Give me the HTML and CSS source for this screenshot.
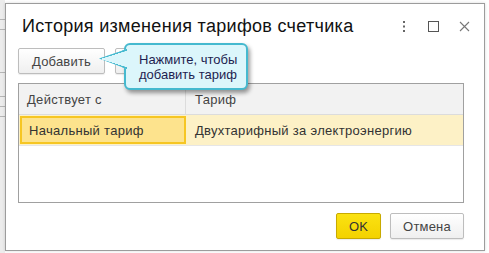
FILE: index.html
```html
<!DOCTYPE html>
<html lang="ru">
<head>
    <meta charset="UTF-8">
    <title>История изменения тарифов счетчика</title>
    <link rel="stylesheet" href="styles.css">
</head>
<body>
    <div class="behind">
        <div class="behind-line"></div>
        <div class="behind-line"></div>
        <div class="behind-line gap"></div>
        <div class="behind-line"></div>
        <div class="behind-line"></div>
        <div class="behind-line"></div>
    </div>

    <div class="dialog">
        <div class="title-bar">
            <h1>История изменения тарифов счетчика</h1>
            <div class="title-tools">
                <svg width="4" height="11" viewBox="0 0 4 11">
                    <rect x="1" y="0" width="2" height="2" fill="#666"/>
                    <rect x="1" y="4.5" width="2" height="2" fill="#666"/>
                    <rect x="1" y="9" width="2" height="2" fill="#666"/>
                </svg>
                <svg width="11" height="11" viewBox="0 0 11 11">
                    <rect x="0.5" y="0.5" width="10" height="10" fill="none" stroke="#555"/>
                </svg>
                <svg width="11" height="11" viewBox="0 0 11 11">
                    <path d="M1 1 L10 10 M10 1 L1 10" stroke="#777" stroke-width="1.1"/>
                </svg>
            </div>
        </div>

        <div class="toolbar">
            <button class="btn">Добавить</button>
            <button class="btn btn-hidden"></button>

            <div class="callout">
                <span class="callout-tail"></span>
                Нажмите, чтобы<br>добавить тариф
            </div>
        </div>

        <div class="grid">
            <div class="grid-head">
                <div class="col-from">Действует с</div>
                <div class="col-tariff">Тариф</div>
            </div>
            <div class="grid-row selected">
                <div class="col-from current">Начальный тариф</div>
                <div class="col-tariff">Двухтарифный за электроэнергию</div>
            </div>
        </div>

        <div class="footer">
            <button class="btn btn-ok">OK</button>
            <button class="btn">Отмена</button>
        </div>
    </div>
</body>
</html>
```

FILE: styles.css
```css
html, body {
    margin: 0;
}

body {
    background: #fff;
    font-family: Arial, "Liberation Sans", sans-serif;
    color: #333;
    display: flex;
    align-items: flex-start;
    height: 253px;
    overflow: hidden;
}

/* the form that sits behind the dialog */
.behind {
    width: 5px;
    height: 253px;
    background: #ececec;
    padding-top: 19px;
    box-sizing: border-box;
}

.behind-line {
    height: 1px;
    background: #b5b5b5;
    margin-bottom: 9px;
}

.behind-line.gap {
    margin-top: 42px;
    margin-bottom: 23px;
}

.dialog {
    margin-top: 3px;
    width: 480px;
    height: 248px;
    box-sizing: border-box;
    background: #fff;
    border: 1px solid #9c9c9c;
    box-shadow: 0 0 3px rgba(0, 0, 0, .15);
    padding: 0 20px 0 12px;
    display: flex;
    flex-direction: column;
}

.title-bar {
    display: flex;
    align-items: center;
    height: 40px;
    padding-left: 4px;
}

h1 {
    flex-grow: 1;
    margin: 0;
    font-size: 18px;
    font-weight: normal;
    letter-spacing: .3px;
    color: #111;
    line-height: 22px;
    padding-top: 4px;
}

.title-tools {
    display: flex;
    align-items: center;
    margin-right: -6px;
    padding-top: 5px;
}

.title-tools svg {
    display: block;
}

.title-tools svg:nth-child(1) { margin-right: 22px; }
.title-tools svg:nth-child(2) { margin-right: 20px; }

.toolbar {
    position: relative;
    display: flex;
    gap: 10px;
    margin-top: 4px;
    height: 26px;
}

.btn {
    height: 26px;
    padding: 0 13px;
    font-family: inherit;
    font-size: 13px;
    letter-spacing: .2px;
    color: #444;
    background: linear-gradient(#ffffff, #efefef);
    border: 1px solid #bdbdbd;
    border-radius: 2px;
    box-shadow: 0 1px 1px rgba(0, 0, 0, .08);
}

.btn-hidden {
    width: 80px;
}

.callout {
    position: absolute;
    left: 106px;
    top: -5px;
    width: 124px;
    height: 47px;
    box-sizing: border-box;
    padding: 7px 0 0 13px;
    background: #dcf6fb;
    border: 2px solid #45b9cf;
    border-radius: 6px;
    box-shadow: 2px 3px 4px rgba(0, 0, 0, .4);
    font-size: 13px;
    line-height: 15px;
    color: #1e1e50;
}

.callout-tail {
    position: absolute;
    left: -27px;
    top: 4px;
    width: 28px;
    height: 20px;
    background: #dcf6fb;
    border-top: 2px solid #45b9cf;
    border-bottom: 2px solid #45b9cf;
    clip-path: polygon(0 48%, 100% 0, 100% 100%);
    box-sizing: border-box;
}

.callout-tail::after {
    content: "";
    position: absolute;
    inset: -2px;
    background: linear-gradient(to bottom right, transparent 46%, #45b9cf 47%, #45b9cf 55%, transparent 56%) top / 100% 50% no-repeat,
                linear-gradient(to top right, transparent 46%, #45b9cf 47%, #45b9cf 55%, transparent 56%) bottom / 100% 50% no-repeat;
}

.grid {
    margin-top: 9px;
    height: 120px;
    box-sizing: border-box;
    border: 1px solid #a0a0a0;
    font-size: 13px;
    letter-spacing: .3px;
}

.grid-head, .grid-row {
    display: flex;
}

.grid-head {
    height: 30px;
    background: #f2f2f2;
    border-bottom: 1px solid #dcdcdc;
    color: #444;
}

.grid-head > div, .grid-row > div {
    display: flex;
    align-items: center;
    box-sizing: border-box;
}

.col-from {
    width: 167px;
    padding-left: 8px;
    border-right: 1px solid #dcdcdc;
}

.col-tariff {
    flex-grow: 1;
    padding-left: 9px;
}

.grid-row {
    height: 30px;
    border-bottom: 1px solid #e6e6e6;
    color: #333;
}

.grid-row.selected {
    background: #fdf1c6;
}

.grid-row .current {
    margin: 1px 0 1px 1px;
    width: 166px;
    background: #fde38d;
    border: 2px solid #f6c623;
    padding-left: 7px;
}

.footer {
    display: flex;
    justify-content: flex-end;
    gap: 9px;
    margin-top: 10px;
}

.btn-ok {
    width: 45px;
    padding: 0;
    color: #333;
    background: linear-gradient(#fbe212, #f3d200);
    border-color: #c8aa00;
}

.footer .btn:last-child {
    width: 74px;
    padding: 0;
}
```
